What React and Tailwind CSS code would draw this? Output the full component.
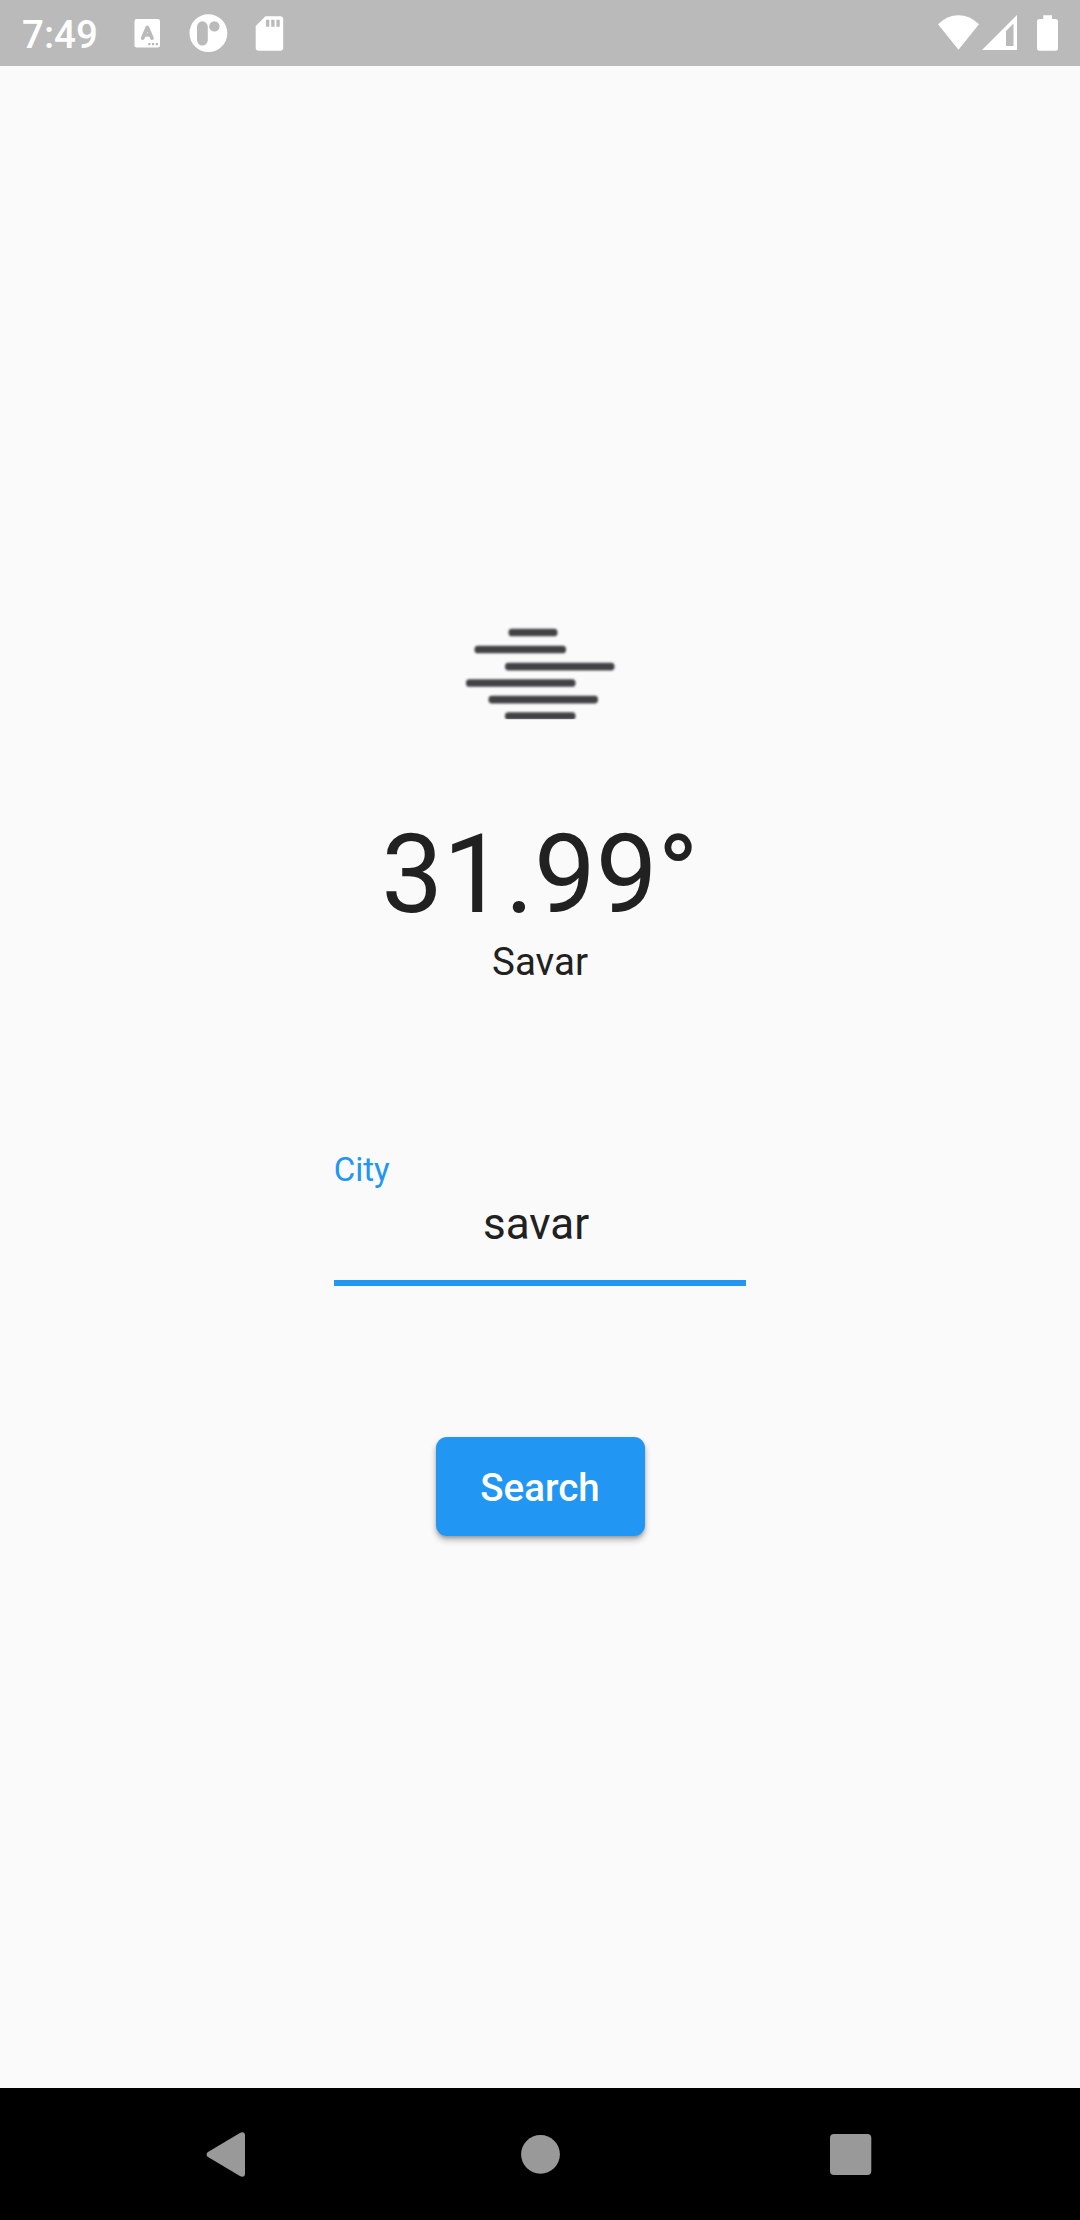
import React from "react";

function StatusBar() {
  return (
    <header className="flex h-[66px] shrink-0 items-center bg-[#bababa] text-white">
      <span className="mt-[2px] ml-[22px] w-[112px] text-[38.5px] leading-[45px] font-medium">7:49</span>
      <svg className="h-[66px] w-[160px]" viewBox="134 0 160 66" aria-hidden="true">
        <rect x="134.5" y="19" width="25.5" height="28.5" rx="2.3" fill="#fff" />
        <path d="M142.6 38.2l4.7-10.900 4.700 10.900M144.500 35h5.800" fill="none" stroke="#bababa" strokeWidth="3.6" strokeLinecap="round" strokeLinejoin="round" />
        <path d="M148.2 43h2.2v2.2h-2.2zM152 43h2.2v2.2H152zM155.8 43h2.2v2.2h-2.2z" fill="#bababa" />
        <circle cx="208.4" cy="33.2" r="18.9" fill="#fff" />
        <rect x="197" y="21.3" width="10.8" height="24.2" rx="5.4" fill="#bababa" />
        <circle cx="214.4" cy="26.4" r="5.2" fill="#bababa" />
        <path d="M265.5 16.3h14.7a3 3 0 0 1 3 3v28.400a3 3 0 0 1-3 3h-21.500a3 3 0 0 1-3-3V26z" fill="#fff" />
        <path d="M266 19.700h3.300v7H266zM271.200 19.700h3.300v7h-3.300zM276.400 19.700h3.300v7h-3.300z" fill="#bababa" />
      </svg>
      <svg className="ml-auto h-[66px] w-[145px]" viewBox="935 0 145 66" fill="#fff" aria-hidden="true">
        <path d="M958.500 49.700L938 24.300Q947 15.300 958.500 15.300T979 24.300z" />
        <path fillRule="evenodd" d="M982 50h35V15zM1006 46V31l7.500-7.500V46z" />
        <path d="M1043.300 15.300h8.700v3.700h3.500a2.500 2.500 0 0 1 2.500 2.500v26.700a2.500 2.500 0 0 1-2.500 2.500h-16a2.500 2.500 0 0 1-2.500-2.500V21.500a2.500 2.500 0 0 1 2.500-2.500h3.800z" />
      </svg>
    </header>
  );
}

const mistBars = [
  { x: 508.5, y: 632.5, w: 49 },
  { x: 474.5, y: 649.5, w: 91.5 },
  { x: 505, y: 666.6, w: 109.5 },
  { x: 466, y: 683, w: 109.5 },
  { x: 488.5, y: 699.6, w: 109.5 },
  { x: 505, y: 716, w: 70.5 },
];

function MistIcon() {
  return (
    <svg className="h-[140px] w-[200px]" viewBox="440 600 200 140" role="img" aria-label="Mist">
      <defs>
        <filter id="soft" x="-10%" y="-100%" width="120%" height="300%">
          <feGaussianBlur stdDeviation="1.1" />
        </filter>
        <clipPath id="frame"><path d="M440 600h200v119.300H440z" /></clipPath>
      </defs>
      <g clipPath="url(#frame)">
        {mistBars.map((b) => (
          <rect key={b.y} x={b.x} y={b.y - 3.8} width={b.w} height="7.6" rx="3.4" fill="#434344" filter="url(#soft)" />
        ))}
      </g>
    </svg>
  );
}

function NavBar() {
  return (
    <nav className="h-[132px] shrink-0 bg-black">
      <svg className="h-full w-full" viewBox="0 2088 1080 132" fill="#999" aria-hidden="true">
        <path d="M207.600 2152.200L240.300 2132.700Q244.800 2131 245 2135.500V2173.500Q244.800 2178 240.300 2176.300L207.600 2156.800Q205.500 2154.500 207.600 2152.200z" />
        <circle cx="540.5" cy="2154.4" r="19.4" />
        <rect x="830" y="2134" width="41.3" height="41" rx="4" />
      </svg>
    </nav>
  );
}

export default function App() {
  return (
    <div className="flex h-[2220px] w-[1080px] flex-col overflow-hidden bg-[#fafafa] font-['Roboto',sans-serif] text-[#212121]">
      <StatusBar />
      <main className="flex flex-1 flex-col items-center pt-[534px]">
        <MistIcon />
        <p className="mt-[70px] text-[110px] leading-[130px]">31.99°</p>
        <p className="-mt-px text-[38.5px] leading-[45px]">Savar</p>
        <label className="mt-[166px] flex w-[412.5px] flex-col">
          <span className="text-[33px] leading-[40px] text-[#2196f3]">City</span>
          <input
            type="text"
            defaultValue="savar"
            className="mt-[8px] h-[52px] w-full bg-transparent pr-[8px] text-center text-[44px] leading-[52px] outline-none"
          />
          <span className="mt-[30px] h-[6px] bg-[#2196f3]" />
        </label>
        <button className="mt-[151px] h-[99px] w-[209px] rounded-[11px] bg-[#2196f3] pt-[2px] text-[38.5px] leading-[45px] font-medium text-white shadow-[0_4px_6px_rgba(0,0,0,0.28),0_2px_3px_rgba(0,0,0,0.14)]">
          Search
        </button>
      </main>
      <NavBar />
    </div>
  );
}
